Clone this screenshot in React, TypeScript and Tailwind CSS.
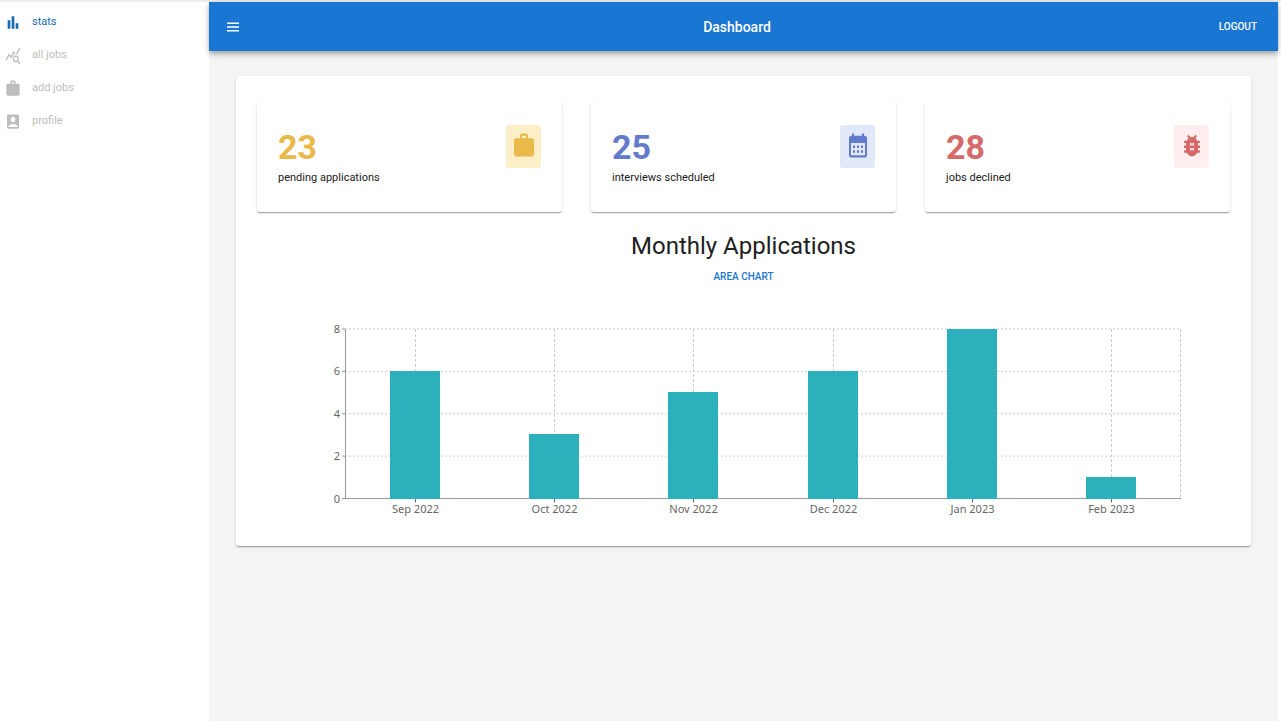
import type { ReactNode } from "react";
import { MdAccountBox, MdBarChart, MdCalendarMonth, MdMenu, MdQueryStats, MdWork } from "react-icons/md";

const icon = "block h-[19px] w-4";

const links: { label: string; icon: ReactNode; active?: boolean }[] = [
  { label: "stats", icon: <MdBarChart className={icon} preserveAspectRatio="none" />, active: true },
  { label: "all jobs", icon: <MdQueryStats className={icon} preserveAspectRatio="none" /> },
  { label: "add jobs", icon: <MdWork className={icon} preserveAspectRatio="none" /> },
  { label: "profile", icon: <MdAccountBox className={icon} preserveAspectRatio="none" /> },
];

const statIcon = "block h-[29px] w-6";

function BugIcon() {
  return (
    <svg viewBox="0 0 24 24" preserveAspectRatio="none" fill="currentColor" className={statIcon} aria-hidden="true">
      <path d="M20 8h-2.81a5.985 5.985 0 0 0-1.82-1.96L17 4.41 15.59 3l-2.17 2.17C12.96 5.06 12.49 5 12 5s-.96.06-1.41.17L8.41 3 7 4.41l1.62 1.63C7.88 6.55 7.26 7.22 6.81 8H4v2h2.09c-.05.33-.09.66-.09 1v1H4v2h2v1c0 .34.04.67.09 1H4v2h2.81c1.04 1.79 2.97 3 5.19 3s4.15-1.21 5.19-3H20v-2h-2.09c.05-.33.09-.66.09-1v-1h2v-2h-2v-1c0-.34-.04-.67-.09-1H20V8zm-6 8h-4v-2h4v2zm0-4h-4v-2h4v2z" />
      <path d="M11.6 10h.8v6h-.8z" opacity="0.7" />
    </svg>
  );
}

const stats = [
  {
    count: 23,
    label: "pending applications",
    color: "text-[#e9b949]",
    tile: "bg-[#fcefc7]",
    icon: <MdWork className={statIcon} preserveAspectRatio="none" />,
  },
  {
    count: 25,
    label: "interviews scheduled",
    color: "text-[#647acb]",
    tile: "bg-[#e0e8f9]",
    icon: <MdCalendarMonth className={statIcon} preserveAspectRatio="none" />,
  },
  {
    count: 28,
    label: "jobs declined",
    color: "text-[#d66a6a]",
    tile: "bg-[#ffeeee]",
    icon: <BugIcon />,
  },
];

const months = [
  { date: "Sep 2022", count: 6 },
  { date: "Oct 2022", count: 3 },
  { date: "Nov 2022", count: 5 },
  { date: "Dec 2022", count: 6 },
  { date: "Jan 2023", count: 8 },
  { date: "Feb 2023", count: 1 },
];

const LEFT = 40;
const BOTTOM = 178.5;
const PLOT_W = 836;
const PLOT_H = 169.5;
const TOP = BOTTOM - PLOT_H;
const BAR_W = 50;
const STEP = PLOT_W / months.length;

const y = (v: number) => BOTTOM - (v / 8) * PLOT_H;
const x = (i: number) => Math.round(LEFT + STEP * (i + 0.5)) + 0.5;

function MonthlyChart() {
  return (
    <svg
      viewBox="0 0 877 200"
      className="block w-full font-['Noto_Sans',sans-serif] text-[11px]"
      role="img"
      aria-label="Applications per month"
    >
      <g stroke="#ccc">
        {[0, 2, 4, 6, 8].map((v) => (
          <line key={v} x1={LEFT} x2={LEFT + PLOT_W} y1={y(v)} y2={y(v)} strokeDasharray="2 2" />
        ))}
        {months.map((m, i) => (
          <line key={m.date} x1={x(i)} x2={x(i)} y1={TOP} y2={BOTTOM} strokeDasharray="3 2" />
        ))}
        <line x1={LEFT + PLOT_W - 0.5} x2={LEFT + PLOT_W - 0.5} y1={TOP} y2={BOTTOM} strokeDasharray="3 2" />
      </g>
      <g stroke="#999">
        <line x1={LEFT + 0.5} x2={LEFT + 0.5} y1={TOP} y2={BOTTOM} />
        <line x1={LEFT} x2={LEFT + PLOT_W} y1={BOTTOM} y2={BOTTOM} />
        {[0, 2, 4, 6, 8].map((v) => (
          <line key={v} x1={LEFT - 3} x2={LEFT} y1={y(v)} y2={y(v)} />
        ))}
      </g>
      {months.map((m, i) => {
        const top = Math.floor(y(m.count));
        return (
          <g key={m.date}>
            <line x1={x(i)} x2={x(i)} y1={BOTTOM} y2={BOTTOM + 4} stroke="#666" />
            <rect x={x(i) - 0.5 - BAR_W / 2} y={top} width={BAR_W} height={BOTTOM + 0.5 - top} fill="#2cb1bc" />
            <text x={x(i)} y={BOTTOM + 14} textAnchor="middle" fill="#666">
              {m.date}
            </text>
          </g>
        );
      })}
      {[0, 2, 4, 6, 8].map((v) => (
        <text key={v} x={LEFT - 5} y={y(v) + 4} textAnchor="end" fill="#666">
          {v}
        </text>
      ))}
    </svg>
  );
}

export default function App() {
  return (
    <div className="flex min-h-screen flex-col border-t-2 border-[#ebebeb] bg-white pr-[3px] font-[Roboto,sans-serif] text-[#212121]">
      <div className="flex grow">
        <aside className="w-[209px] shrink-0 pt-1">
          <nav className="flex flex-col">
            {links.map((link) => (
              <a
                key={link.label}
                href="#"
                aria-current={link.active ? "page" : undefined}
                className={`flex h-[33px] items-center gap-[11px] pl-[5px] text-[11px] ${link.active ? "text-[#1769aa]" : "text-[#bdbdbd]"}`}
              >
                {link.icon}
                {link.label}
              </a>
            ))}
          </nav>
        </aside>
        <div className="flex min-w-0 grow flex-col bg-[#f4f4f4]">
          <header className="flex h-[49px] items-center bg-[#1976d2] text-white shadow-[0_2px_4px_-1px_rgba(0,0,0,0.2),0_4px_5px_0_rgba(0,0,0,0.14),0_1px_10px_0_rgba(0,0,0,0.12)]">
            <div className="flex flex-1 pl-4">
              <button type="button" aria-label="Toggle menu">
                <MdMenu className="block h-[18px] w-4" preserveAspectRatio="none" />
              </button>
            </div>
            <h1 className="pr-2 text-sm font-medium">Dashboard</h1>
            <div className="flex flex-1 justify-end pr-[21px]">
              <button type="button" className="text-[10px] font-medium">
                LOGOUT
              </button>
            </div>
          </header>
          <main className="px-[27px] pt-[25px]">
            <section className="rounded-[3px] bg-white px-[21px] pt-[25px] pb-[26px] shadow-[0_2px_1px_-1px_rgba(0,0,0,0.2),0_1px_1px_0_rgba(0,0,0,0.14),0_1px_3px_0_rgba(0,0,0,0.12)]">
              <div className="grid grid-cols-3 gap-[29px]">
                {stats.map((s) => (
                  <article
                    key={s.label}
                    className="flex h-[111px] items-start justify-between rounded-[3px] px-[21px] pt-6 shadow-[0_2px_1px_-1px_rgba(0,0,0,0.2),0_1px_1px_0_rgba(0,0,0,0.14),0_1px_3px_0_rgba(0,0,0,0.12)]"
                  >
                    <div>
                      <div className={`text-[34px] leading-[44px] font-bold ${s.color}`}>{s.count}</div>
                      <div className="text-[11px] leading-[18px]">{s.label}</div>
                    </div>
                    <div className={`flex h-[43px] w-[35px] justify-center rounded-[3px] pt-1.5 ${s.tile} ${s.color}`}>
                      {s.icon}
                    </div>
                  </article>
                ))}
              </div>
              <div className="flex flex-col items-center pt-4">
                <h2 className="text-2xl leading-9">Monthly Applications</h2>
                <button type="button" className="h-6 text-[10px] font-medium text-[#1976d2]">
                  AREA CHART
                </button>
              </div>
              <div className="px-12 pt-8">
                <MonthlyChart />
              </div>
            </section>
          </main>
        </div>
      </div>
    </div>
  );
}
